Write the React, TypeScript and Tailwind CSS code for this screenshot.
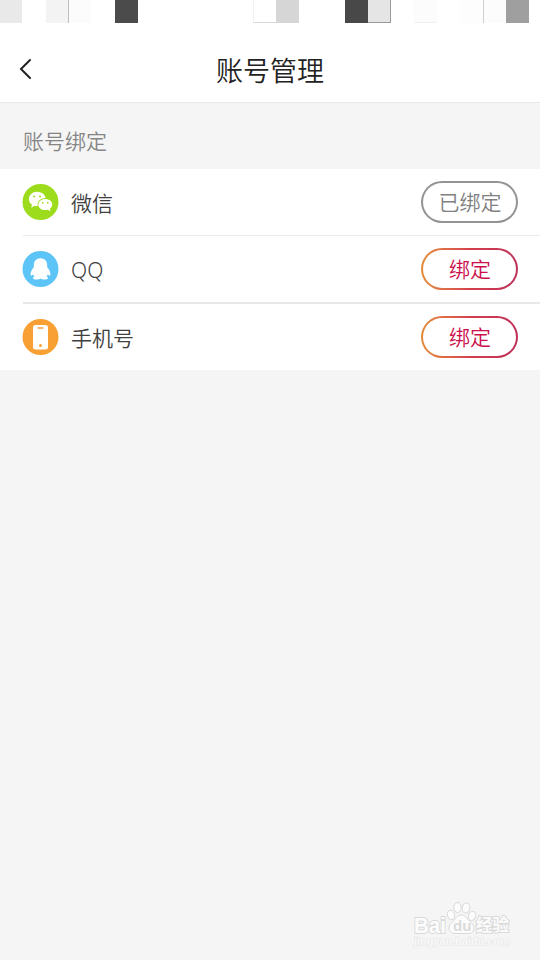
import React from "react";
import clsx from "clsx";

interface AccountRowProps {
  icon: React.ReactNode;
  name: string;
  bound?: boolean;
  className?: string;
}

const statusBlocks = [
  "w-[22px] bg-[#e9e9e9]",
  "w-[24px]",
  "w-[23px] bg-[#f3f3f3] border-r border-[#bdbdbd]",
  "w-[22px] bg-[#fcfcfc]",
  "w-[24px]",
  "w-[23px] bg-[#4b4b4b]",
  "w-[115px]",
  "w-[23px] border-l border-b border-l-[#f2f2f2] border-b-[#d8d8d8]",
  "w-[23px] bg-[#d6d6d6]",
  "w-[46px]",
  "w-[23px] bg-[#484848]",
  "w-[23px] bg-[#e5e5e5] border-r border-b border-[#9a9a9a]",
  "w-[23px]",
  "w-[23px] bg-[#fcfcfc] border-b border-[#f0f0f0]",
  "w-[23px]",
  "w-[24px] bg-[#fdfdfd] border-r border-[#cfcfcf]",
  "w-[22px] bg-[#fcfcfc]",
  "w-[23px] bg-[#9f9f9f]",
];

const WechatIcon = () => (
  <svg className="size-[37px]" viewBox="0 0 37 37">
    <circle cx="18.5" cy="18" r="18" fill="#9cdc1c" />
    <path
      d="M15 7.700c4.500 0 8.200 2.800 8.600 6.400-4.600.2-8 2.800-8 6.400 0 .5.1 1 .2 1.500-1.100.1-2.200 0-3.200-.3l-3.300 2 .6-3.200c-1.900-1.400-3-3.200-3-5.300 0-4.200 3.600-7.500 8.100-7.500z"
      fill="#fff"
    />
    <path
      d="M23.300 14.900c4 0 7 2.400 7 5.600 0 1.700-.9 3.200-2.400 4.200l.6 2.600-2.700-1.500c-.8.2-1.600.3-2.500.3-4 0-7-2.500-7-5.600s3-5.600 7-5.600z"
      fill="#fff"
    />
    <g fill="#9cdc1c">
      <circle cx="12.200" cy="12.500" r="1" />
      <circle cx="18" cy="12.500" r="1" />
      <circle cx="20.800" cy="18.800" r=".9" />
      <circle cx="25.800" cy="18.800" r=".9" />
    </g>
  </svg>
);

const QQIcon = () => (
  <svg className="size-[37px]" viewBox="0 0 37 37">
    <circle cx="18.5" cy="18" r="18" fill="#5cc4f6" />
    <path
      d="M18.500 7.200c-4.300 0-6.700 3-6.700 6.900v2.200c-1.800 2-3.200 4.500-3.200 6.900 0 1.300.5 1.700 1.200 1.300.6-.3 1-.7 1.500-1 .3.900.7 1.500 1.300 2.100-1 .4-1.600.9-1.600 1.500 0 1.200 1.700 1.500 3.500 1.500 1.600 0 3.200-.3 4-1 .8.700 2.400 1 4 1 1.800 0 3.500-.3 3.500-1.500 0-.6-.6-1.100-1.600-1.500.6-.6 1-1.200 1.300-2.100.5.300.9.700 1.500 1 .7.400 1.200 0 1.200-1.300 0-2.400-1.400-4.900-3.200-6.900v-2.200c0-3.900-2.400-6.900-6.700-6.900z"
      fill="#fff"
    />
  </svg>
);

const PhoneIcon = () => (
  <svg className="size-[37px]" viewBox="0 0 37 37">
    <circle cx="18.5" cy="18" r="18" fill="#f8a034" />
    <rect x="11" y="6" width="15" height="24.500" rx="2.500" fill="#fff" />
    <rect x="15.500" y="8.200" width="6" height="1.600" rx=".8" fill="#f8a034" />
    <circle cx="18.5" cy="26.500" r="1.500" fill="#f8a034" />
  </svg>
);

const BindButton = ({ bound }: { bound?: boolean }) => (
  <button
    className={clsx(
      "h-[42px] w-[97px] rounded-full p-[2px]",
      bound
        ? "bg-[#939393] text-[#808080]"
        : "bg-linear-to-r from-[#e28c38] via-[#d5404e] to-[#bd3059] text-[#cc0f4b]"
    )}
  >
    <span className="flex h-full items-center justify-center rounded-full bg-white pl-px text-[21px] leading-none">
      {bound ? "已绑定" : "绑定"}
    </span>
  </button>
);

const AccountRow = ({ icon, name, bound, className }: AccountRowProps) => (
  <div className={clsx("flex items-center bg-white px-[22px]", className)}>
    {icon}
    <span className="ml-[12px] flex-1 pt-[2px] text-[21px] leading-none text-[#404040]">
      {name}
    </span>
    <BindButton bound={bound} />
  </div>
);

const Watermark = () => (
  <div className="absolute top-[900px] left-[413px] w-[100px]">
    <svg
      className="h-[36px] w-[100px]"
      viewBox="0 0 100 36"
      fill="#fcfcfc"
      stroke="#d9d9d9"
      strokeWidth="1"
    >
      <ellipse cx="38" cy="15" rx="3.500" ry="4.700" transform="rotate(-15 38 15)" />
      <ellipse cx="44.500" cy="7.500" rx="3.800" ry="5" />
      <ellipse cx="53" cy="8" rx="3.800" ry="5" transform="rotate(12 53 8)" />
      <ellipse cx="59" cy="16" rx="3.600" ry="4.700" transform="rotate(20 59 16)" />
      <path d="M48 15c-4 0-5.500 4-8 6.500-3 2.500-4 4-4 6.500 0 3.500 2.500 5.500 6 5.500h13c4 0 6-2.500 6-5.500s-2-4.500-4.500-7C54 18.500 52 15 48 15z" />
      <g
        fontFamily="'Liberation Sans', 'Noto Sans CJK SC', sans-serif"
        fontWeight="700"
        paintOrder="stroke"
      >
        <text x="1" y="32.500" fontSize="22" strokeWidth="2" textLength="32" lengthAdjust="spacingAndGlyphs">
          Bai
        </text>
        <text x="40" y="31" fontSize="15" fill="#dadada" stroke="none">
          du
        </text>
        <text x="63" y="31" fontSize="16.500" strokeWidth="2" textLength="33" fontFamily="'Noto Sans CJK SC', sans-serif">
          经验
        </text>
      </g>
    </svg>
    <svg className="h-[12px] w-[100px]" viewBox="0 0 100 12">
      <text
        x="1"
        y="8.500"
        fontSize="10"
        fontFamily="'Liberation Sans', sans-serif"
        fontWeight="700"
        fill="#f9f9f9"
        stroke="#e6e6e6"
        strokeWidth="1"
        paintOrder="stroke"
        textLength="96"
        lengthAdjust="spacingAndGlyphs"
      >
        jingyan.baidu.com
      </text>
    </svg>
  </div>
);

const App = () => {
  return (
    <div className="relative h-[960px] w-[540px] overflow-hidden bg-[#f5f5f5] font-['Noto_Sans','Noto_Sans_CJK_SC',sans-serif] font-[350]">
      <header className="flex h-[103px] flex-col border-b border-[#e8e8e8] bg-white">
        <div className="flex h-[23px]">
          {statusBlocks.map((block, i) => (
            <div key={i} className={clsx("shrink-0", block)} />
          ))}
        </div>
        <div className="grid flex-1 grid-cols-[60px_1fr_60px] items-center pb-[11px] pt-[23px]">
          <svg
            className="ml-[19px] h-[22px] w-[14px]"
            viewBox="0 0 14 22"
            fill="none"
            stroke="#222"
            strokeWidth="2"
            strokeLinecap="round"
          >
            <path d="M11 2L2 11l9 9" />
          </svg>
          <h1 className="pt-[4px] text-center text-[27px] leading-none font-[350] text-[#222]">
            账号管理
          </h1>
        </div>
      </header>

      <h2 className="flex h-[66px] items-center pt-[10px] pl-[23px] text-[21px] leading-none font-[350] text-[#858585]">
        账号绑定
      </h2>

      <main className="bg-white">
        <AccountRow icon={<WechatIcon />} name="微信" bound className="h-[66px]" />
        <div className="ml-[23px] h-px bg-[#e9e9e9]" />
        <AccountRow icon={<QQIcon />} name="QQ" className="h-[66px]" />
        <div className="ml-[23px] h-[2px] bg-[#e8e8e8]" />
        <AccountRow icon={<PhoneIcon />} name="手机号" className="h-[66px]" />
      </main>

      <Watermark />
    </div>
  );
};

export default App;
